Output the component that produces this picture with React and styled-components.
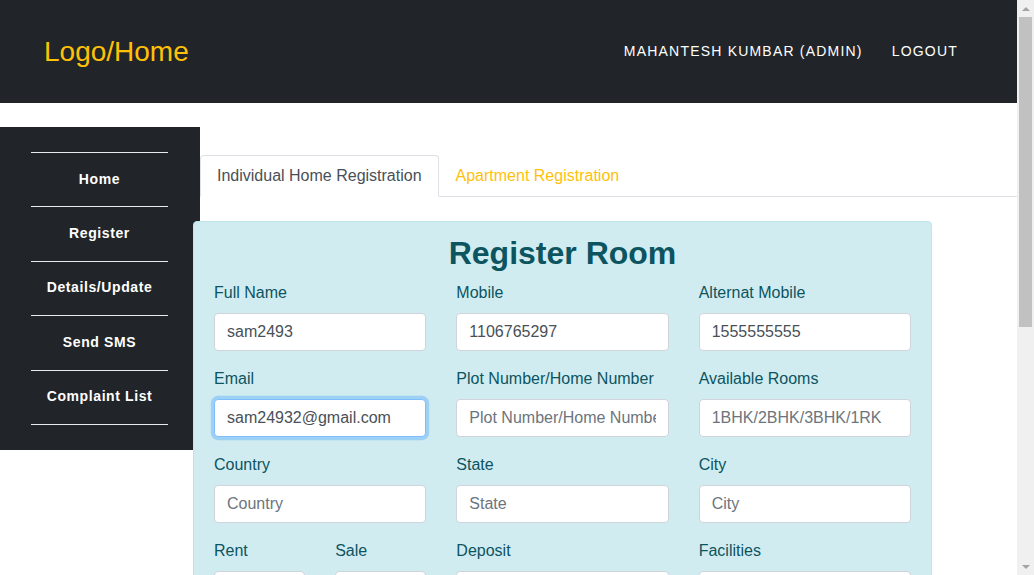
import React from "react";
import styled, { createGlobalStyle } from "styled-components";

const GlobalStyle = createGlobalStyle`
  *, *::before, *::after { box-sizing: border-box; }
  body {
    margin: 0;
    overflow: hidden;
    font-family: "Liberation Sans", Arial, sans-serif;
    font-size: 16px;
    line-height: 1.5;
    color: #212529;
    background: #fff;
  }
`;

const Frame = styled.div`
  display: flex;
  height: 100vh;
`;

const Viewport = styled.div`
  flex: 1;
  min-width: 0;
  overflow: hidden;
`;

const ScrollTrack = styled.div`
  width: 17px;
  flex-shrink: 0;
  background: #f0f0f0;
  display: flex;
  flex-direction: column;
  align-items: center;
`;

const Arrow = styled.div`
  height: 17px;
  width: 100%;
  display: flex;
  align-items: center;
  justify-content: center;
  &::before {
    content: "";
    border-left: 4px solid transparent;
    border-right: 4px solid transparent;
    ${(p) =>
      p.$down
        ? "border-top: 4px solid #a3a3a3;"
        : "border-bottom: 4px solid #a3a3a3;"}
  }
`;

const Thumb = styled.div`
  width: 13px;
  height: 310px;
  background: #c1c1c1;
`;

const Spacer = styled.div`
  flex: 1;
`;

const Header = styled.header`
  height: 103px;
  background: #212529;
  display: flex;
  align-items: center;
  justify-content: space-between;
  padding: 0 59px 0 44px;
`;

const Brand = styled.a`
  color: #ffc107;
  font-size: 28px;
  line-height: 1;
  text-decoration: none;
`;

const TopNav = styled.nav`
  display: flex;
  gap: 29px;
`;

const TopLink = styled.a`
  color: #fff;
  font-size: 14px;
  letter-spacing: 1.2px;
  text-transform: uppercase;
  text-decoration: none;
`;

const Layout = styled.div`
  display: flex;
  align-items: flex-start;
`;

const Sidebar = styled.aside`
  width: 200px;
  flex-shrink: 0;
  margin-top: 24px;
  background: #212529;
  padding: 25px 0;
`;

const SideList = styled.ul`
  list-style: none;
  margin: 0 32px 0 31px;
  padding: 0;
  border-top: 1px solid #e9ecef;
`;

const SideItem = styled.li`
  height: 54.4px;
  padding-bottom: 1px;
  border-bottom: 1px solid #e9ecef;
  display: flex;
  align-items: center;
  justify-content: center;
  color: #fff;
  font-size: 14px;
  font-weight: bold;
  letter-spacing: 0.6px;
`;

const Main = styled.main`
  flex: 1;
  padding-top: 52px;
  padding-bottom: 178px;
`;

const Tabs = styled.div`
  display: flex;
  border-bottom: 1px solid #dee2e6;
`;

const Tab = styled.a`
  padding: 8px 16px;
  margin-bottom: -1px;
  border: 1px solid ${(p) => (p.$active ? "#dee2e6" : "transparent")};
  border-bottom-color: ${(p) => (p.$active ? "#fff" : "transparent")};
  border-radius: 4px 4px 0 0;
  background: ${(p) => (p.$active ? "#fff" : "transparent")};
  color: ${(p) => (p.$active ? "#495057" : "#ffc107")};
  text-decoration: none;
`;

const Card = styled.section`
  width: 739px;
  margin: 24px 0 0 -7px;
  padding: 12px 20px 20px;
  background: #d1ecf1;
  border: 1px solid #bee5eb;
  border-radius: 4px;
  color: #0c5460;
`;

const Title = styled.h2`
  margin: 0 0 9px;
  text-align: center;
  font-size: 32px;
  font-weight: bold;
  line-height: 1.2;
`;

const Grid = styled.div`
  display: grid;
  grid-template-columns: repeat(3, 1fr);
  column-gap: 30px;
`;

const Pair = styled.div`
  display: grid;
  grid-template-columns: 1fr 1fr;
  column-gap: 30px;
`;

const Group = styled.div`
  margin-bottom: 16px;
`;

const Label = styled.label`
  display: block;
  margin-bottom: 8px;
`;

const Input = styled.input`
  display: block;
  width: 100%;
  height: 38px;
  padding: 6px 12px;
  font: inherit;
  font-size: 16px;
  line-height: 24px;
  color: #495057;
  background: #fff;
  border: 1px solid ${(p) => (p.$focused ? "#80bdff" : "#ced4da")};
  border-radius: 4px;
  outline: none;
  box-shadow: ${(p) => (p.$focused ? "0 0 0 3.2px rgba(0,123,255,.25)" : "none")};
  &::placeholder { color: #6c757d; opacity: 1; }
`;

const TextArea = styled.textarea`
  display: block;
  width: 100%;
  height: 86px;
  padding: 6px 12px;
  font: inherit;
  color: #495057;
  background: #fff;
  border: 1px solid #ced4da;
  border-radius: 4px;
  resize: none;
  &::placeholder { color: #6c757d; }
`;

const Submit = styled.button`
  display: block;
  margin: 8px auto 0;
  padding: 6px 24px;
  font: inherit;
  color: #fff;
  background: #17a2b8;
  border: 1px solid #17a2b8;
  border-radius: 4px;
`;

const Field = ({ label, value, placeholder, focused }) => (
  <Group>
    <Label>{label}</Label>
    <Input
      defaultValue={value}
      placeholder={placeholder}
      $focused={focused}
      autoFocus={focused}
    />
  </Group>
);

const sideLinks = ["Home", "Register", "Details/Update", "Send SMS", "Complaint List"];

export default function App() {
  return (
    <>
      <GlobalStyle />
      <Frame>
        <Viewport>
          <Header>
            <Brand href="#">Logo/Home</Brand>
            <TopNav>
              <TopLink href="#">Mahantesh Kumbar (Admin)</TopLink>
              <TopLink href="#">Logout</TopLink>
            </TopNav>
          </Header>
          <Layout>
            <Sidebar>
              <SideList>
                {sideLinks.map((l) => (
                  <SideItem key={l}>{l}</SideItem>
                ))}
              </SideList>
            </Sidebar>
            <Main>
              <Tabs>
                <Tab $active href="#">Individual Home Registration</Tab>
                <Tab href="#">Apartment Registration</Tab>
              </Tabs>
              <Card>
                <Title>Register Room</Title>
                <Grid>
                  <Field label="Full Name" value="sam2493" />
                  <Field label="Mobile" value="1106765297" />
                  <Field label="Alternat Mobile" value="1555555555" />
                  <Field label="Email" value="sam24932@gmail.com" focused />
                  <Field label="Plot Number/Home Number" placeholder="Plot Number/Home Number" />
                  <Field label="Available Rooms" placeholder="1BHK/2BHK/3BHK/1RK" />
                  <Field label="Country" placeholder="Country" />
                  <Field label="State" placeholder="State" />
                  <Field label="City" placeholder="City" />
                  <Pair>
                    <Field label="Rent" placeholder="Rent" />
                    <Field label="Sale" placeholder="Sale" />
                  </Pair>
                  <Field label="Deposit" placeholder="Deposit" />
                  <Field label="Facilities" placeholder="Facilities" />
                  <Group>
                    <Label>Landmark</Label>
                    <TextArea placeholder="Landmark" />
                  </Group>
                  <Group>
                    <Label>Address</Label>
                    <TextArea placeholder="Address" />
                  </Group>
                  <Field label="Pincode" placeholder="Pincode" />
                </Grid>
                <Submit>Register</Submit>
              </Card>
            </Main>
          </Layout>
        </Viewport>
        <ScrollTrack>
          <Arrow />
          <Thumb />
          <Spacer />
          <Arrow $down />
        </ScrollTrack>
      </Frame>
    </>
  );
}
